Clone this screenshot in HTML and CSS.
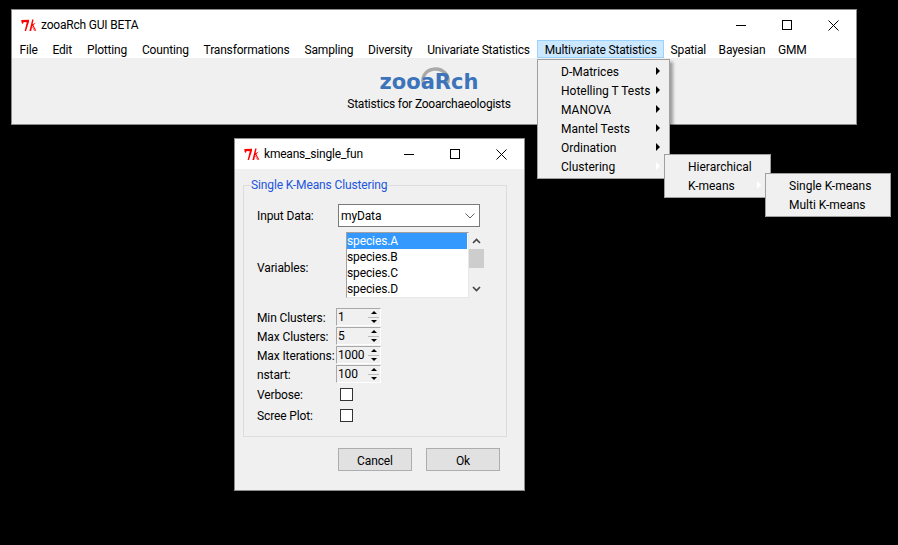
FILE: index.html
```html
<!DOCTYPE html>
<html lang="en">
<head>
<meta charset="utf-8">
<title>zooaRch GUI BETA</title>
<link rel="stylesheet" href="styles.css">
</head>
<body>
<svg class="defs" width="0" height="0" aria-hidden="true">
  <symbol id="tk" viewBox="0 0 16 13">
    <path d="M0.3 1 L8 0.8 L8 2.8 L5 12 L3.6 12 L5.8 3.2 L2.6 3 L2 5 L0.6 4 Z" fill="#f00"/>
    <path d="M11.2 0.6 L12.6 0.6 L11.6 5.2 L14.8 3.4 L12.4 6.2 L15.4 11.8 L13 11.6 L11 8 L10.2 12 L8.4 12 Z" fill="#f00"/>
    <path d="M11.2 7 L13.4 10.8" stroke="#fff" stroke-width="0.7"/>
  </symbol>
</svg>

<section class="window main">
  <header class="titlebar">
    <svg class="tk"><use href="#tk"/></svg>
    <span class="title">zooaRch GUI BETA</span>
    <div class="controls controls-main">
      <span class="ctl"><i class="min"></i></span>
      <span class="ctl"><i class="max"></i></span>
      <span class="ctl"><svg class="close" viewBox="0 0 11 11"><path d="M0.5 0.5 L10.5 10.5 M10.5 0.5 L0.5 10.5" stroke="#000" fill="none"/></svg></span>
    </div>
  </header>
  <nav class="menubar">
    <span class="mi">File</span>
    <span class="mi">Edit</span>
    <span class="mi">Plotting</span>
    <span class="mi">Counting</span>
    <span class="mi">Transformations</span>
    <span class="mi">Sampling</span>
    <span class="mi">Diversity</span>
    <span class="mi">Univariate Statistics</span>
    <span class="mi active">Multivariate Statistics</span>
    <span class="mi mi-spatial">Spatial</span>
    <span class="mi mi-end">Bayesian</span>
    <span class="mi mi-end">GMM</span>
  </nav>
  <div class="banner">
    <div class="logo">
      <svg class="ring" viewBox="0 0 30 26"><path d="M4 21 A12.5 11 0 1 1 26.5 18" fill="none" stroke="#a9a9a9" stroke-width="3.5"/></svg>
      <span class="logo-text">zooaRch</span>
    </div>
    <p class="subtitle">Statistics for Zooarchaeologists</p>
  </div>
</section>

<ul class="menu menu1">
  <li>D-Matrices<b class="arrow"></b></li>
  <li>Hotelling T Tests<b class="arrow"></b></li>
  <li>MANOVA<b class="arrow"></b></li>
  <li>Mantel Tests<b class="arrow"></b></li>
  <li>Ordination<b class="arrow"></b></li>
  <li>Clustering<b class="arrow light"></b></li>
</ul>
<ul class="menu menu2">
  <li>Hierarchical</li>
  <li>K-means<b class="arrow light"></b></li>
</ul>
<ul class="menu menu3">
  <li>Single K-means</li>
  <li>Multi K-means</li>
</ul>

<section class="window dialog">
  <header class="titlebar dlg-title">
    <svg class="tk"><use href="#tk"/></svg>
    <span class="title">kmeans_single_fun</span>
    <div class="controls controls-dlg">
      <span class="ctl"><i class="min"></i></span>
      <span class="ctl"><i class="max"></i></span>
      <span class="ctl"><svg class="close" viewBox="0 0 11 11"><path d="M0.5 0.5 L10.5 10.5 M10.5 0.5 L0.5 10.5" stroke="#000" fill="none"/></svg></span>
    </div>
  </header>
  <div class="dlg-body">
    <fieldset class="group">
      <legend>Single K-Means Clustering</legend>
      <div class="row row-input">
        <label class="lbl lbl-input">Input Data:</label>
        <div class="combo">
          <span>myData</span>
          <svg class="chev" viewBox="0 0 10 6"><path d="M0.5 0.5 L5 5 L9.5 0.5" fill="none" stroke="#606060"/></svg>
        </div>
      </div>
      <div class="row row-vars">
        <label class="lbl lbl-vars">Variables:</label>
        <div class="listwrap">
          <ul class="list">
            <li class="sel">species.A</li>
            <li>species.B</li>
            <li>species.C</li>
            <li>species.D</li>
          </ul>
          <div class="scroll">
            <svg class="sb-arrow" viewBox="0 0 9 6"><path d="M1 5 L4.5 1.5 L8 5" fill="none" stroke="#444" stroke-width="1.6"/></svg>
            <div class="thumb"></div>
            <svg class="sb-arrow sb-down" viewBox="0 0 9 6"><path d="M1 1 L4.5 4.5 L8 1" fill="none" stroke="#444" stroke-width="1.6"/></svg>
          </div>
        </div>
      </div>
      <div class="spins">
        <label class="lbl">Min Clusters:</label>
        <div class="spin"><span>1</span><div class="btns"><i class="up"></i><i class="down"></i></div></div>
        <label class="lbl">Max Clusters:</label>
        <div class="spin"><span>5</span><div class="btns"><i class="up"></i><i class="down"></i></div></div>
        <label class="lbl">Max Iterations:</label>
        <div class="spin"><span>1000</span><div class="btns"><i class="up"></i><i class="down"></i></div></div>
        <label class="lbl">nstart:</label>
        <div class="spin"><span>100</span><div class="btns"><i class="up"></i><i class="down"></i></div></div>
      </div>
      <div class="row row-check row-check1">
        <label class="lbl lbl-check">Verbose:</label><span class="check"></span>
      </div>
      <div class="row row-check row-check2">
        <label class="lbl lbl-check">Scree Plot:</label><span class="check"></span>
      </div>
    </fieldset>
    <div class="actions">
      <button class="btn" type="button">Cancel</button>
      <button class="btn" type="button">Ok</button>
    </div>
  </div>
</section>
</body>
</html>
```
FILE: styles.css
```css
* { box-sizing: border-box; }
html, body { margin: 0; padding: 0; }
body {
  width: 898px;
  height: 545px;
  background: #000;
  position: relative;
  overflow: hidden;
  font-family: "Roboto", "Noto Sans", sans-serif;
  font-size: 12px;
  color: #000;
  line-height: 16px;
}
.defs { position: absolute; }

/* windows */
.window {
  position: absolute;
  background: #f0f0f0;
  border: 1px solid #8c8c8c;
  display: flex;
  flex-direction: column;
}
.main { left: 11px; top: 9px; width: 846px; height: 116px; }
.dialog { left: 234px; top: 138px; width: 291px; height: 353px; letter-spacing: -0.12px; }

.titlebar {
  background: #fff;
  height: 30px;
  display: flex;
  align-items: center;
  padding-left: 9px;
  flex: none;
}
.dlg-title { height: 30px; }
.tk { width: 16px; height: 13px; flex: none; }
.title { margin-left: 4px; letter-spacing: -0.2px; }
.controls { margin-left: auto; display: flex; align-items: center; height: 100%; }
.ctl { width: 46px; height: 100%; display: flex; align-items: center; justify-content: center; }
.min { display: block; width: 10px; height: 1px; background: #000; }
.max { display: block; width: 10px; height: 10px; border: 1px solid #000; }
.close { width: 11px; height: 11px; }

.menubar {
  background: #fff;
  height: 18px;
  display: flex;
  flex: none;
  letter-spacing: -0.17px;
}
.mi { padding: 2px 7.45px 0; height: 18px; white-space: nowrap; }
.mi.active { background: #cce8ff; box-shadow: inset 0 0 0 1px #99d1ff; }
.mi-spatial { padding-left: 6.5px; padding-right: 6.5px; }
.mi-end { padding-left: 6px; padding-right: 6.5px; }

.banner {
  flex: 1;
  display: flex;
  flex-direction: column;
  align-items: center;
  padding-right: 10px;
}
.logo { position: relative; height: 38px; width: 100px; text-align: center; }
.logo-text {
  position: absolute;
  left: 0; right: 0; top: 12px;
  font-family: "DejaVu Sans", sans-serif;
  font-weight: 700;
  font-size: 21px;
  line-height: 24px;
  color: #3b74ba;
}
.ring { position: absolute; left: 42px; top: 7px; width: 30px; height: 26px; }
.subtitle { margin: 0; letter-spacing: -0.22px; }

/* menus */
.menu {
  position: absolute;
  margin: 0;
  padding: 2px;
  list-style: none;
  background: #f0f0f0;
  border: 1px solid #a0a0a0;
  box-shadow: 3px 3px 3px rgba(0, 0, 0, 0.35);
}
.menu li { position: relative; height: 19px; padding: 2px 0 0 21px; white-space: nowrap; }
.menu1 { left: 537px; top: 59px; width: 133px; height: 120px; }
.menu2 { left: 664px; top: 154px; width: 107px; height: 44px; }
.menu3 { left: 765px; top: 173px; width: 126px; height: 44px; }
.arrow {
  position: absolute;
  right: 7px; top: 5px;
  border-left: 4px solid #000;
  border-top: 4px solid transparent;
  border-bottom: 4px solid transparent;
}
.arrow.light { border-left-color: #fff; }

/* dialog */
.dlg-body { flex: 1; padding: 0 17px 0 8px; display: flex; flex-direction: column; }
.group {
  margin: 8px 0 0;
  padding: 0 0 0 13px;
  border: 1px solid #dcdcdc;
  height: 260px;
  min-width: 0;
}
.group legend { color: #2255dd; padding: 0; margin-left: -6px; line-height: 16px; }
.row { display: flex; align-items: center; }
.lbl { white-space: nowrap; }
.row-input { margin-top: 11px; height: 23px; }
.lbl-input { width: 81px; flex: none; }
.combo {
  width: 142px;
  height: 23px;
  background: #fff;
  border: 1px solid #7a7a7a;
  display: flex;
  align-items: center;
  justify-content: space-between;
  padding: 0 4px 0 2px;
}
.chev { width: 10px; height: 6px; }
.row-vars { margin-top: 5px; height: 66px; }
.lbl-vars { width: 89px; flex: none; padding-top: 6px; }
.listwrap { display: flex; }
.list {
  width: 123px;
  height: 66px;
  margin: 0;
  padding: 0;
  list-style: none;
  background: #fff;
  border: 1px solid #a0a0a0;
  border-right-color: #e8e8e8;
  border-bottom-color: #e8e8e8;
  overflow: hidden;
}
.list li { height: 16px; margin-right: 1px; }
.list li.sel { background: #3399ff; color: #fff; }
.scroll { width: 16px; height: 66px; position: relative; display: flex; flex-direction: column; align-items: center; }
.sb-arrow { width: 9px; height: 6px; margin-top: 6px; flex: none; margin-right: 2px; }
.thumb { width: 15px; height: 19px; background: #cdcdcd; margin-top: 5px; margin-right: 1px; flex: none; }
.sb-down { margin-top: 18px; }

.spins {
  display: grid;
  grid-template-columns: 79px 45px;
  grid-auto-rows: 18px;
  row-gap: 1px;
  margin-top: 10px;
  align-items: center;
}
.spins .lbl { padding-top: 2px; }
.spin {
  height: 18px;
  background: #f0f0f0;
  border: 1px solid #a8a8a8;
  border-right-color: #fff;
  border-bottom-color: #fff;
  display: flex;
  justify-content: space-between;
  padding-left: 1px;
  line-height: 17px;
}
.btns { width: 11px; height: 16px; display: flex; flex-direction: column; background: #f0f0f0; margin-right: 1px; flex: none; }
.btns i { flex: 1; display: flex; align-items: center; justify-content: center; }
.btns i::before { content: ""; border-left: 3px solid transparent; border-right: 3px solid transparent; }
.btns .up { border-bottom: 1px solid #bbb; }
.btns .up::before { border-bottom: 3px solid #000; }
.btns .down::before { border-top: 3px solid #000; }

.row-check { height: 21px; }
.row-check1 { margin-top: 1px; }
.lbl-check { width: 83px; flex: none; }
.check { width: 13px; height: 13px; background: #fff; border: 1px solid #333; }

.actions { display: flex; justify-content: flex-end; gap: 14px; margin-top: 11px; margin-right: 7px; }
.btn {
  width: 74px;
  height: 23px;
  background: #e1e1e1;
  border: 1px solid #adadad;
  font: inherit;
  letter-spacing: inherit;
  color: #000;
  padding: 2px 0 0;
}
```
